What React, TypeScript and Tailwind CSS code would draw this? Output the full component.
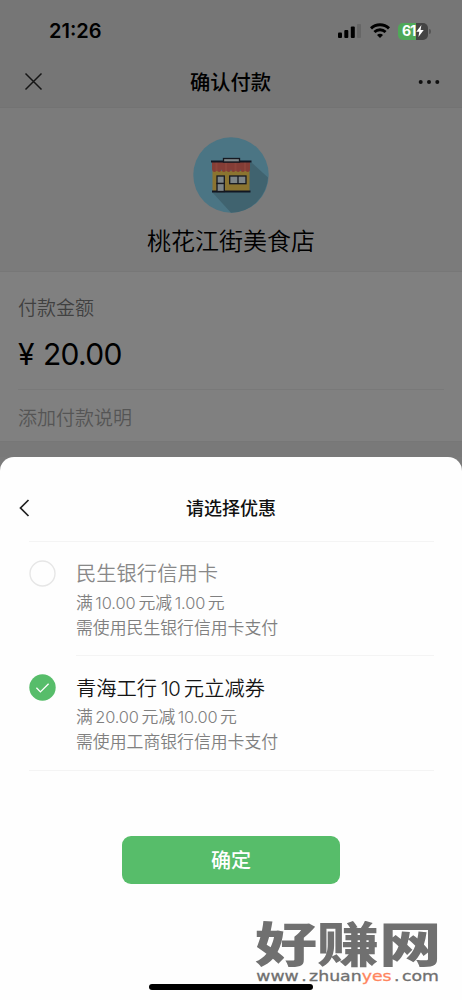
import { useState } from "react";
import clsx from "clsx";

type Coupon = {
  id: string;
  title: React.ReactNode;
  rule: React.ReactNode;
  note: string;
  disabled?: boolean;
};

// Latin digits inside Chinese text
const Num = ({ children, className }: { children: string; className?: string }) => (
  <span className={clsx("inline-block", className)}>{children}</span>
);

const coupons: Coupon[] = [
  {
    id: "cmbc",
    title: "民生银行信用卡",
    rule: (
      <>
        满<Num className="mr-[3px] ml-[2.5px] text-[16.4px] tracking-[-0.1px]">10.00</Num>元减<Num className="mr-[2.5px] ml-[2.5px] text-[16.4px] tracking-[-0.1px]">1.00</Num>元
      </>
    ),
    note: "需使用民生银行信用卡支付",
    disabled: true,
  },
  {
    id: "icbc",
    title: (
      <>
        青海工行<Num className="mx-[3.5px] tracking-[-0.4px]">10</Num>元立减券
      </>
    ),
    rule: (
      <>
        满<Num className="mr-[3px] ml-[2.5px] text-[16.4px] tracking-[-0.2px]">20.00</Num>元减<Num className="mr-[2.5px] ml-[2.5px] text-[16.4px] tracking-[-0.2px]">10.00</Num>元
      </>
    ),
    note: "需使用工商银行信用卡支付",
  },
];

function StatusBar() {
  return (
    <div className="flex h-[56px] items-center justify-between pt-[6px] pr-[31px] pl-[49px]">
      <span className="text-[20px] leading-6 font-semibold">21:26</span>
      <div className="flex items-center">
        <svg width="24" height="16" viewBox="0 0 24 16">
          <rect x="0" y="9.5" width="4" height="5.5" rx="1" />
          <rect x="6.3" y="7" width="4" height="8" rx="1" />
          <rect x="12.8" y="3.5" width="4" height="11.5" rx="1" />
          <rect x="19" y="1" width="4" height="14" rx="1" fill="#666" />
        </svg>
        <svg className="ml-[8px]" width="20" height="16" viewBox="0 0 20 16" fill="none" stroke="black" strokeWidth="2.9">
          <path d="M1 5.4C6 .6 14 .6 19 5.4" />
          <path d="M4.4 9C7.6 6 12.4 6 15.6 9" />
          <path d="M7 11.9c1.7-1.5 4.3-1.5 6 0l-3 3z" fill="black" stroke="none" />
        </svg>
        <div className="ml-[8px] flex h-[17px] w-[30px] items-center overflow-hidden rounded-[5px] bg-[linear-gradient(90deg,#4fa858_61%,#444_61%)] pl-[4px] text-white">
          <span className="text-[14px] leading-none font-bold tracking-[-0.9px]">61</span>
          <svg className="ml-px" width="8" height="12" viewBox="0 0 8 12" fill="white">
            <path d="M5.4 0 .3 6.8h3L2.4 12l5.3-7H4.6z" />
          </svg>
        </div>
        <span className="ml-px h-[5px] w-[2px] rounded-r bg-[#555]" />
      </div>
    </div>
  );
}

function StoreIcon() {
  return (
    <svg width="76" height="76" viewBox="0 0 76 76">
      <circle cx="38" cy="38" r="37.7" fill="#4b7584" />
      <path d="M58 25 75 40.5A37.7 37.7 0 0 1 38 75.7L19 55z" fill="#40636f" />
      <rect x="19.5" y="34" width="37" height="20" fill="#8b7430" />
      <path d="M19 25h38v7c0 4-4.7 4-4.7 0 0 4-4.8 4-4.8 0 0 4-4.7 4-4.7 0 0 4-4.8 4-4.8 0 0 4-4.7 4-4.7 0 0 4-4.8 4-4.8 0 0 4-4.7 4-4.7 0 0 4-4.8 4-4.8 0z" fill="#843d36" />
      <path d="M23.5 25v9M33 25v9M42.5 25v9M52 25v9" stroke="#8c443b" strokeWidth="2" />
      <path d="M18 24.5h40.5M19 54.5h38.5" stroke="#111622" strokeWidth="2" />
      <g fill="#7d8588" stroke="#151820" strokeWidth="1.3">
        <rect x="30.5" y="21.5" width="16" height="3.5" />
        <rect x="24" y="39" width="7.3" height="7.5" />
        <rect x="24" y="46.5" width="7.3" height="8" />
        <rect x="36.7" y="39" width="16.3" height="7.7" />
        <path d="M45 39v7.7" />
      </g>
    </svg>
  );
}

function Check({ checked }: { checked: boolean }) {
  return (
    <svg className="mt-[5px] size-[27px] shrink-0" viewBox="0 0 27 27" fill="none">
      {checked ? (
        <>
          <circle cx="13.5" cy="13.5" r="13.2" fill="#57bd6a" />
          <path d="m7.4 13.8 4 4.1 8.2-8.2" stroke="white" strokeWidth="1.3" />
        </>
      ) : (
        <circle cx="13.5" cy="13.5" r="12.5" stroke="#e6e6e6" strokeWidth="1.4" />
      )}
    </svg>
  );
}

export default function App() {
  const [selected, setSelected] = useState("icbc");

  return (
    <div className="relative flex h-[1000px] w-[462px] flex-col overflow-hidden bg-[#7b7b7b] font-['Inter','Noto_Sans_CJK_SC',sans-serif] text-black">
      {/* Dimmed payment page */}
      <header className="h-[108px] border-b border-[#737373] bg-[#767676]">
        <StatusBar />
        <div className="flex h-[51px] items-center justify-between pr-[22px] pl-[24px]">
          <svg width="19" height="19" viewBox="0 0 19 19" stroke="#151515" strokeWidth="1.5">
            <path d="m1.5 1.5 16 16m0-16-16 16" />
          </svg>
          <h1 className="pt-[2px] text-[20.3px] leading-7 font-medium">确认付款</h1>
          <svg width="22" height="6" viewBox="0 0 22 6" fill="#101010">
            <circle cx="2.7" cy="3" r="2" />
            <circle cx="11" cy="3" r="2" />
            <circle cx="19.3" cy="3" r="2" />
          </svg>
        </div>
      </header>

      <section className="flex h-[163px] flex-col items-center pt-[29px]">
        <StoreIcon />
        <p className="mt-[11px] text-[24px] leading-9 font-[350]">桃花江街美食店</p>
      </section>

      <section className="h-[171px] border-y border-[#777] bg-[#808080] px-[18px] pt-[23px]">
        <p className="text-[19px] leading-7 font-[350] text-[#404040]">付款金额</p>
        <p className="mt-[11px] flex items-center text-[30px] leading-10">
          <span className="w-[25px]">¥</span>
          <span className="tracking-[-0.7px]">20.00</span>
        </p>
        <div className="mt-[15px] border-t border-[#797979] pt-[15px]">
          <p className="text-[19px] leading-7 font-[350] text-[#555]">添加付款说明</p>
        </div>
      </section>
      <div className="h-[15px] shrink-0 bg-[#797979]" />

      {/* Discount sheet */}
      <main className="relative -mb-4 flex h-[543px] shrink-0 flex-col rounded-t-[14px] bg-[#fefefe]">
        <div className="flex h-[84px] items-center pt-[18px]">
          <svg className="ml-[18px] w-[12px]" height="18" viewBox="0 0 12 18" fill="none" stroke="#202020" strokeWidth="1.7">
            <path d="m10.5 1-8 8 8 8" />
          </svg>
          <h2 className="mt-[2px] mr-[30px] flex-1 text-center text-[18px] leading-6 font-medium text-[#111]">请选择优惠</h2>
        </div>

        <div className="mr-[28px] ml-[29px] border-y border-[#f4f4f4]">
          {coupons.map((c, i) => (
            <div
              key={c.id}
              className={clsx("flex cursor-pointer", i === 0 ? "h-[113px]" : "h-[115px]")}
              onClick={() => setSelected(c.id)}
            >
              <div className={i === 0 ? "pt-[13px]" : "pt-[14px]"}>
                <Check checked={selected === c.id} />
              </div>
              <div className={clsx("ml-[20px] flex-1", i === 0 ? "pt-[17px]" : "border-t border-[#f4f4f4] pt-[18px]")}>
                <p className={clsx("text-[20.3px] leading-[30px] font-[350]", c.disabled ? "text-[#888]" : "text-[#151515]")}>{c.title}</p>
                <p className={clsx("text-[16.85px] leading-[25px] font-[350] text-[#808080]", i === 0 ? "mt-[2px]" : "mt-px")}>{c.rule}</p>
                <p className="text-[16.85px] leading-[25px] font-[350] text-[#808080]">{c.note}</p>
              </div>
            </div>
          ))}
        </div>

        <button className="mx-auto mt-[65px] h-[48px] w-[218px] rounded-[9px] bg-[#57bd6a] pt-[2px] text-[20px] font-medium text-white">
          确定
        </button>
      </main>

      <div className="absolute top-[984px] left-[149px] h-[6px] w-[164px] rounded-full bg-black" />

      {/* Site watermark */}
      <div className="absolute top-[921px] left-[255px] w-[190px] text-[#707070]">
        <div className="h-[48px] overflow-hidden">
          <div className="origin-top-left scale-x-[1.01] scale-y-[0.77] text-[61.5px] leading-[62px] font-black whitespace-nowrap">好赚网</div>
        </div>
        <div className="w-[150px] origin-left scale-x-[1.235] pl-px font-['DejaVu_Sans'] text-[14px] leading-[14px] whitespace-nowrap [-webkit-text-stroke:0.3px]">
          www<span className="mx-[2px]">.</span>zhuan<span className="text-[#ff865f]">yes</span><span className="mx-[2px]">.</span>com
        </div>
      </div>
    </div>
  );
}
